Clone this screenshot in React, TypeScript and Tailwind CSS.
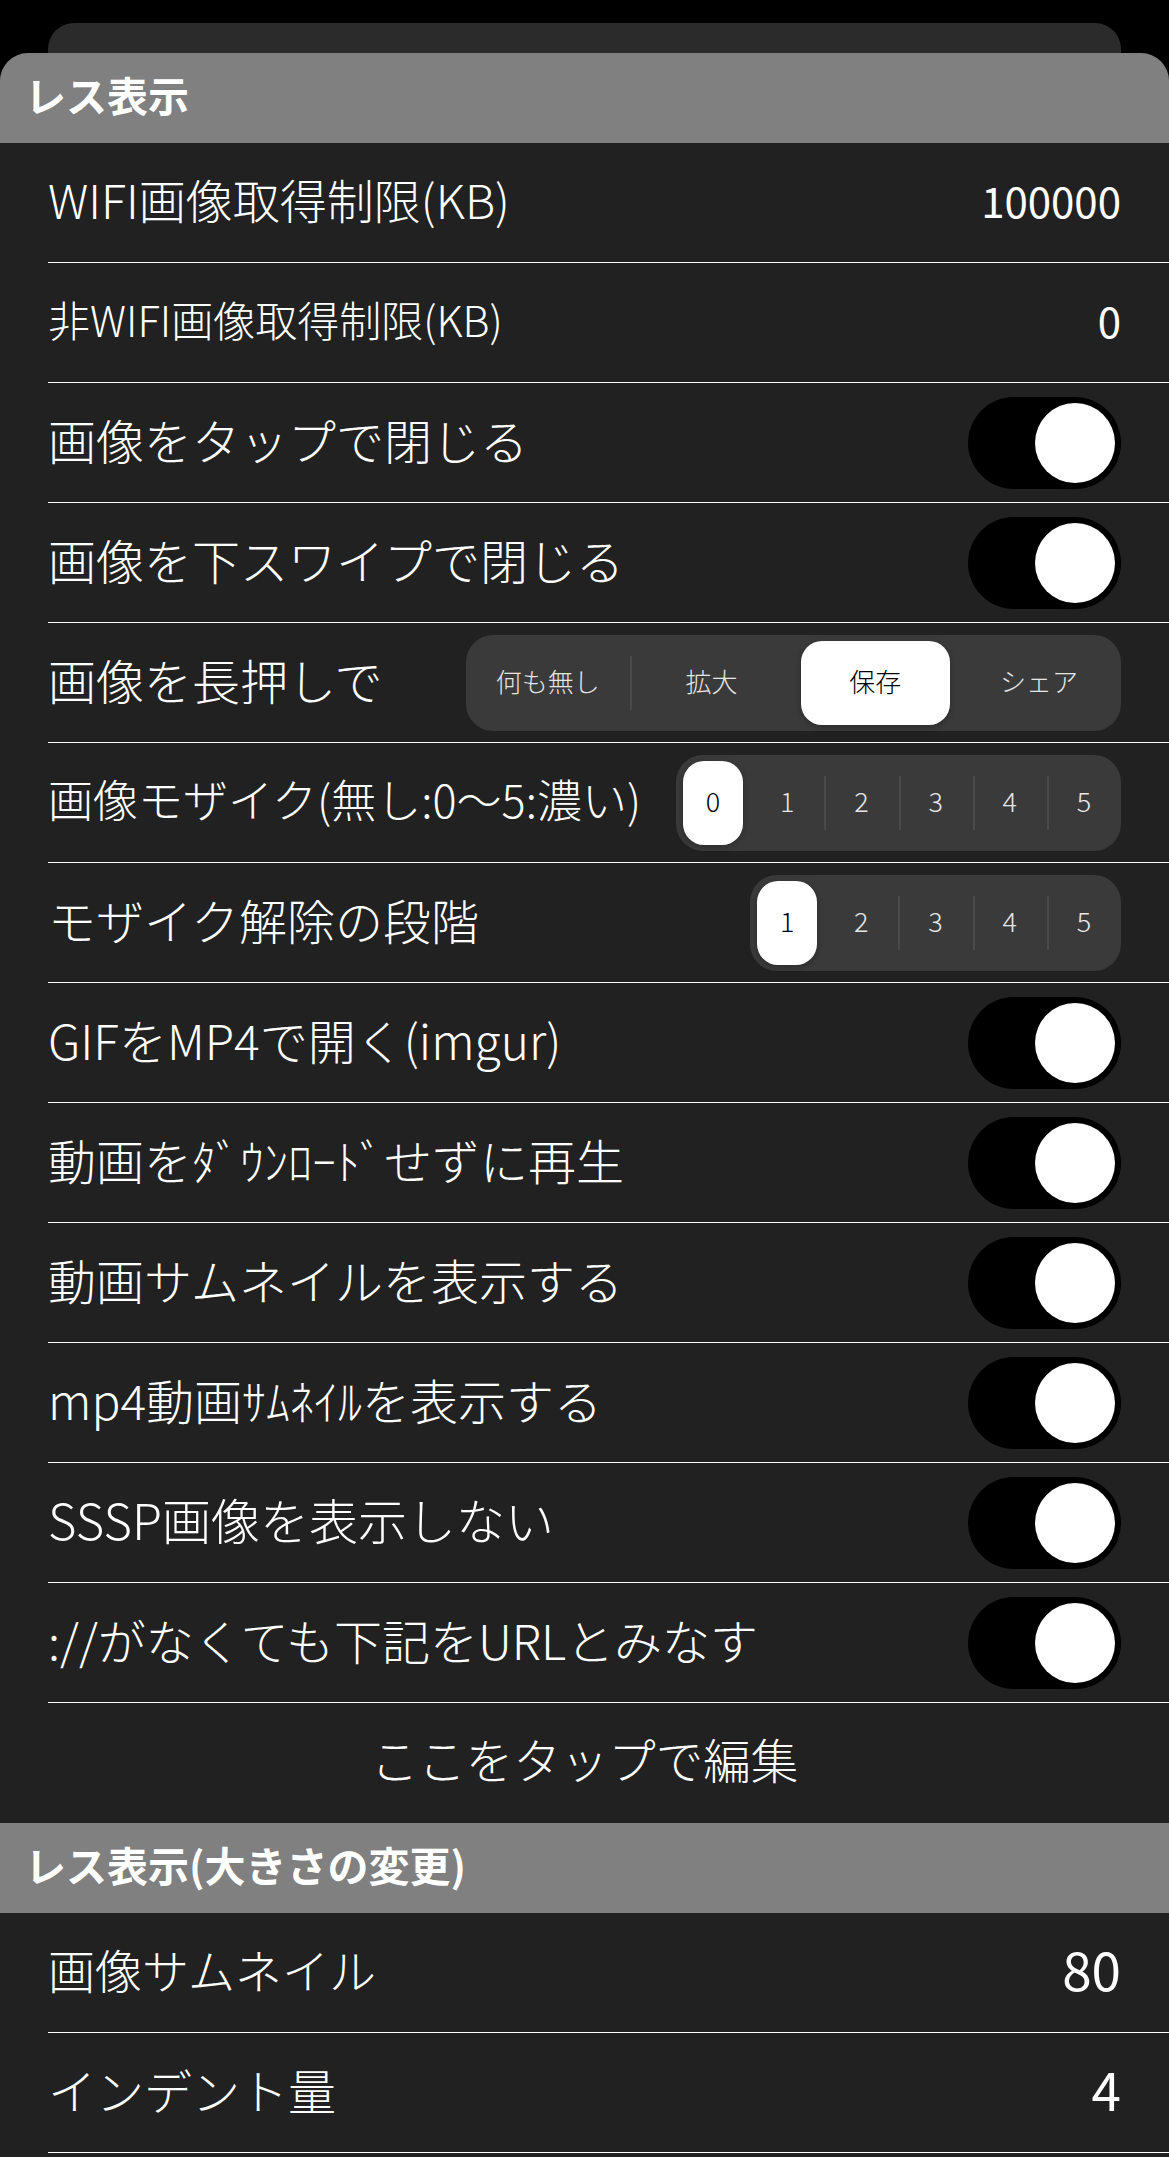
import React from "react";

const FONT = { fontFamily: '"Noto Sans CJK JP", "Noto Sans", sans-serif' };

function Toggle() {
  return (
    <div className="relative h-[92px] w-[153px] shrink-0 rounded-full bg-black">
      <div className="absolute right-[6px] top-[6px] h-[80px] w-[80px] rounded-full bg-white shadow-[0_2px_6px_rgba(0,0,0,0.35)]" />
    </div>
  );
}

function Row({
  label,
  size = "text-[48px]",
  right,
}: {
  label: string;
  size?: string;
  right?: React.ReactNode;
}) {
  return (
    <div className="ml-[48px] flex h-[120px] items-center justify-between border-b border-white pr-[48px]">
      <span className={`${size} pb-[0.16em] font-light leading-none whitespace-nowrap text-white`}>
        {label}
      </span>
      {right}
    </div>
  );
}

function Segmented({
  items,
  selected,
  width,
  textSize,
}: {
  items: string[];
  selected: number;
  width: string;
  textSize: string;
}) {
  return (
    <div className={`flex h-[96px] ${width} shrink-0 rounded-[27px] bg-[#3a3a3a]`}>
      {items.map((it, i) => {
        const isSel = i === selected;
        const showDivider = i > 0 && i !== selected && i - 1 !== selected;
        return (
          <div key={i} className="relative flex flex-1 items-center justify-center">
            {showDivider && (
              <div className="absolute left-0 top-[21px] h-[54px] w-[2px] bg-[#4a4a4a]" />
            )}
            {isSel && (
              <div className="absolute inset-x-[7px] inset-y-[6px] rounded-[21px] bg-white shadow-[0_2px_6px_rgba(0,0,0,0.25)]" />
            )}
            <span
              className={`relative ${textSize} pb-[0.12em] font-light leading-none ${isSel ? "text-black" : "text-[#e6e6e6]"}`}
            >
              {it}
            </span>
          </div>
        );
      })}
    </div>
  );
}

function Value({ text, size = "text-[42px]" }: { text: string; size?: string }) {
  return <span className={`${size} pb-[0.14em] font-normal leading-none text-white`}>{text}</span>;
}

function Header({ text }: { text: string }) {
  return (
    <div className="flex h-[90px] items-center bg-[#808080] pl-[25px]">
      <span className="pb-[0.18em] text-[41px] font-bold leading-none text-white">{text}</span>
    </div>
  );
}

export default function App() {
  return (
    <div className="flex h-[2157px] flex-col overflow-hidden bg-black" style={FONT}>
      <div className="px-[48px] pt-[23px]">
        <div className="h-[30px] rounded-t-[26px] bg-[#2b2b2b]" />
      </div>
      <div className="flex flex-1 flex-col overflow-hidden rounded-t-[28px] bg-[#212121]">
        <Header text="レス表示" />
        <Row label="WIFI画像取得制限(KB)" size="text-[47px]" right={<Value text="100000" />} />
        <Row label="非WIFI画像取得制限(KB)" size="text-[42px]" right={<Value text="0" />} />
        <Row label="画像をタップで閉じる" right={<Toggle />} />
        <Row label="画像を下スワイプで閉じる" right={<Toggle />} />
        <Row
          label="画像を長押しで"
          right={
            <Segmented
              items={["何も無し", "拡大", "保存", "シェア"]}
              selected={2}
              width="w-[655px]"
              textSize="text-[26px]"
            />
          }
        />
        <Row
          label="画像モザイク(無し:0〜5:濃い)"
          size="text-[45px]"
          right={
            <Segmented
              items={["0", "1", "2", "3", "4", "5"]}
              selected={0}
              width="w-[445px]"
              textSize="text-[27px]"
            />
          }
        />
        <Row
          label="モザイク解除の段階"
          right={
            <Segmented
              items={["1", "2", "3", "4", "5"]}
              selected={0}
              width="w-[371px]"
              textSize="text-[27px]"
            />
          }
        />
        <Row label="GIFをMP4で開く(imgur)" right={<Toggle />} />
        <Row label="動画をﾀﾞｳﾝﾛｰﾄﾞせずに再生" right={<Toggle />} />
        <Row label="動画サムネイルを表示する" right={<Toggle />} />
        <Row label="mp4動画ｻﾑﾈｲﾙを表示する" right={<Toggle />} />
        <Row label="SSSP画像を表示しない" size="text-[49px]" right={<Toggle />} />
        <Row label="://がなくても下記をURLとみなす" right={<Toggle />} />
        <div className="flex h-[120px] items-center justify-center">
          <span className="pb-[0.16em] text-[47.5px] font-light leading-none text-white">
            ここをタップで編集
          </span>
        </div>
        <Header text="レス表示(大きさの変更)" />
        <Row label="画像サムネイル" size="text-[47px]" right={<Value text="80" size="text-[53px]" />} />
        <Row label="インデント量" right={<Value text="4" size="text-[53px]" />} />
      </div>
    </div>
  );
}
